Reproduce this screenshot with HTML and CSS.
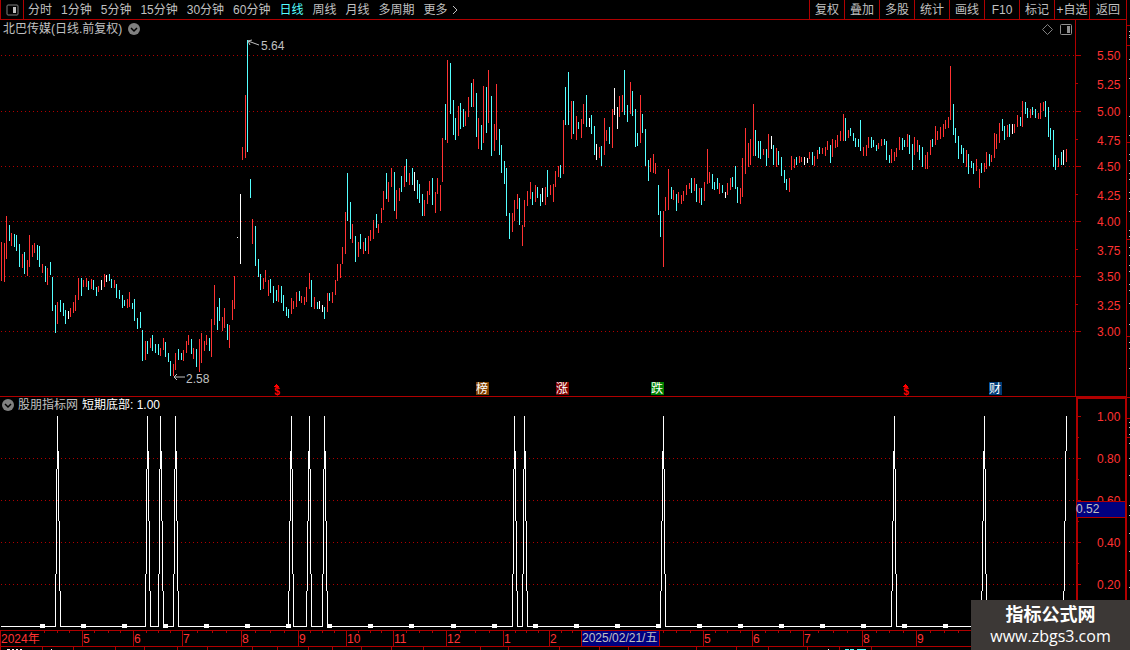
FILE: index.html
```html
<!DOCTYPE html>
<html lang="zh-CN">
<head>
<meta charset="utf-8">
<title>北巴传媒 日线</title>
<link rel="stylesheet" href="styles.css">
</head>
<body>
<div class="app">
  <header class="toolbar">
    <button class="layout-btn" type="button" aria-label="布局">
      <svg class="layout-icon" width="13" height="12" viewBox="0 0 13 12"><rect x="1" y="1" width="11" height="10" rx="1" fill="none" stroke="#808080"/><rect x="7" y="3" width="3" height="6" fill="#c0c0c0"/></svg>
    </button>
    <nav class="periods">
      <button type="button">分时</button>
      <button type="button">1分钟</button>
      <button type="button">5分钟</button>
      <button type="button">15分钟</button>
      <button type="button">30分钟</button>
      <button type="button">60分钟</button>
      <button type="button" class="active">日线</button>
      <button type="button">周线</button>
      <button type="button">月线</button>
      <button type="button">多周期</button>
      <button type="button" class="more">更多<svg width="6" height="10" viewBox="0 0 6 10"><path d="M1 1L5 5L1 9" fill="none" stroke="#c0c0c0"/></svg></button>
    </nav>
    <div class="tools">
      <button type="button">复权</button>
      <button type="button">叠加</button>
      <button type="button">多股</button>
      <button type="button">统计</button>
      <button type="button">画线</button>
      <button type="button">F10</button>
      <button type="button">标记</button>
      <button type="button">+自选</button>
      <button type="button" class="back">返回</button>
    </div>
  </header>

  <section class="panel">
    <div class="panel-title">
      <span>北巴传媒(日线.前复权)</span>
      <button type="button" class="round" aria-label="展开"><svg width="12" height="12" viewBox="0 0 12 12"><circle cx="6" cy="6" r="6" fill="#808080"/><path d="M3 5L6 8L9 5" fill="none" stroke="#000" stroke-width="1.5"/></svg></button>
      <span class="corner">
        <svg width="11" height="11" viewBox="0 0 11 11"><path d="M5.500 .5L10.500 5.500L5.500 10.500L.5 5.500Z" fill="none" stroke="#808080"/></svg>
        <svg width="12" height="11" viewBox="0 0 12 11"><rect x=".5" y=".5" width="11" height="10" rx="1" fill="none" stroke="#909090"/><rect x="7" y="2" width="3" height="7" fill="#909090"/></svg>
      </span>
    </div>
    <svg class="plot" viewBox="0 20 1126 377">
      <g id="price-grid" class="grid"></g>
      <g class="frame"><path id="price-frame"/></g>
      <path id="bars-r" class="up"/><path id="bars-c" class="down"/><path id="bars-w" class="flat"/>
      <g class="scale" id="price-scale"></g>
      <g class="arrow"><path d="M248 41L259 45M248 41L252 40M248 41L250 45"/><path d="M174 377H185M174 377L177 374M174 377L177 380"/></g>
      <text class="note" x="261" y="50">5.64</text>
      <text class="note" x="186" y="383">2.58</text>
      <path class="hat" d="M276 384h1v1h1v1h1v1h-5v-1h1v-1h1zM905 384h1v1h1v1h1v1h-5v-1h1v-1h1z"/>
      <text class="dollar" x="277" y="395">$</text>
      <text class="dollar" x="906" y="395">$</text>
      <rect x="476" y="382" width="13" height="13" fill="#804000"/><text class="mark" x="482" y="393">榜</text>
      <rect x="556" y="382" width="13" height="13" fill="#800000"/><text class="mark" x="562" y="393">涨</text>
      <rect x="651" y="382" width="13" height="13" fill="#008000"/><text class="mark" x="657" y="393">跌</text>
      <rect x="989" y="382" width="13" height="13" fill="#003c78"/><text class="mark" x="995" y="393">财</text>
    </svg>
  </section>

  <section class="panel">
    <div class="panel-title indicator-title">
      <button type="button" class="round" aria-label="展开"><svg width="12" height="12" viewBox="0 0 12 12"><circle cx="6" cy="6" r="6" fill="#808080"/><path d="M3 5L6 8L9 5" fill="none" stroke="#000" stroke-width="1.5"/></svg></button>
      <span>股朋指标网</span>
      <span class="value">短期底部: 1.00</span>
    </div>
    <svg class="plot" viewBox="0 397 1126 233">
      <g id="ind-grid" class="grid"></g>
      <g class="frame"><path id="ind-frame"/></g>
      <path id="spikes" class="flat"/>
      <g class="scale" id="ind-scale"></g>
      <rect class="cursor-box" x="1077" y="501" width="48" height="17"/>
      <path class="cursor-edge" d="M1077 501h48v1h-48zM1077 517h48v1h-48z"/>
      <text class="note cursor-text" x="1076" y="513">0.52</text>
    </svg>
  </section>

  <section class="panel">
    <svg class="plot" viewBox="0 630 1126 20">
      <g class="frame"><path id="time-frame"/></g>
      <rect class="cursor-box" x="582" y="631" width="77" height="15"/>
      <g id="time-labels" class="scale"></g>
      <text class="note cursor-text" x="582" y="642">2025/02/21/五</text>
      <path class="flat" d="M7 649h3v1h-3zM12 649h2v1h-2zM16 649h2v1h-2zM20 649h2v1h-2zM51 649h1v1h-1zM828 649h1v1h-1z"/>
      <path class="down" d="M845 649h4v1h-4zM850 649h4v1h-4zM857 649h9v1h-9z"/>
    </svg>
  </section>

  <aside class="edge"><svg width="3" height="650" viewBox="0 0 3 650"><path id="edge-red" class="edge-red"/><path id="edge-gray" class="edge-gray"/></svg></aside>

  <a class="watermark" href="#"><strong>指标公式网</strong><span>www.zbgs3.com</span></a>
</div>
<script src="chart.js"></script>
</body>
</html>
```

FILE: styles.css
```css
* { box-sizing: border-box; }

body {
  margin: 0;
  background: #000;
  color: #c0c0c0;
  font: 12px/16px "Liberation Sans", "Noto Sans CJK SC", sans-serif;
}

button {
  margin: 0;
  padding: 0;
  border: 0;
  background: none;
  color: inherit;
  font: inherit;
  white-space: nowrap;
}

.app {
  position: relative;
  display: grid;
  grid-template-columns: minmax(0, 1fr) 4px;
}

.toolbar {
  grid-column: 1;
  display: flex;
  height: 20px;
  border-bottom: 1px solid #b00000;
}

.layout-btn {
  width: 24px;
  border: solid #b00000;
  border-width: 0 1px;
}

.layout-icon { display: block; margin: 0 auto; }

.periods {
  display: flex;
  flex: 1;
  gap: 9px;
  padding-left: 4px;
}

.periods .active { color: #54ffff; }

.more {
  display: flex;
  align-items: center;
  gap: 4px;
}

.tools { display: flex; }

.tools button {
  width: 35px;
  border-left: 1px solid #b00000;
}

.tools .back { width: 37px; }

.panel {
  grid-column: 1;
  position: relative;
}

.plot {
  display: block;
  width: 100%;
  height: auto;
}

.panel-title {
  position: absolute;
  top: 1px;
  left: 3px;
  right: 54px;
  display: flex;
  align-items: center;
  gap: 6px;
}

.indicator-title {
  top: 0;
  left: 2px;
  gap: 4px;
}

.indicator-title .value { color: #fff; }

.round svg { display: block; }

.corner {
  display: flex;
  gap: 7px;
  margin-left: auto;
}

.grid path { fill: #b00000; }
.frame path { fill: #b00000; }
.up { fill: #ff3232; }
.down { fill: #54ffff; }
.flat { fill: #fff; }
.scale text { fill: #ff3232; }
.note { fill: #c0c0c0; }
.arrow path { fill: none; stroke: #c0c0c0; }
.hat { fill: #f00; }

.dollar {
  fill: #f00;
  font-size: 10px;
  font-weight: bold;
  text-anchor: middle;
}

.mark {
  fill: #fff;
  font-size: 12px;
  text-anchor: middle;
}

.cursor-box { fill: #000080; }
.cursor-edge { fill: #b00000; }

.edge {
  grid-column: 2;
  grid-row: 1 / span 4;
  border-left: 1px solid #b00000;
}

.edge svg { display: block; }
.edge-red { fill: #b00000; }
.edge-gray { fill: #c0c0c0; }

.watermark {
  position: absolute;
  right: 0;
  bottom: 0;
  width: 159px;
  height: 50px;
  padding-top: 4px;
  background: #3c3836;
  color: #fff;
  text-align: center;
  text-decoration: none;
}

.watermark strong {
  display: block;
  font-size: 18px;
  line-height: 22px;
}

.watermark span {
  display: block;
  font: 16px/20px "Open Sans", sans-serif;
}
```

FILE: chart.js
```js
// Each bar: colour (r up, c down, w unchanged), x, high, low.
const BARS = `
r1,242,281 r4,243,282 r6,216,259 c9,225,241 r11,233,246 c14,234,247 c16,235,251 c19,244,267 r22,254,268 c24,252,274
r27,260,276 r29,235,267 r32,245,257 r34,243,253 c37,245,260 c39,246,267 r42,264,273 c45,266,282 r47,268,285 c50,262,275
c52,277,311 c55,305,333 r57,302,324 c60,300,312 c63,303,316 c65,310,324 w68,311,319 r70,308,317 r73,302,313 r75,295,311
r78,278,300 c81,278,296 r83,280,287 r86,278,287 c88,281,290 r91,279,289 c93,280,290 c96,287,296 r98,286,292 w101,280,290
r104,274,287 w106,275,282 c109,274,281 c111,279,288 r114,280,288 c116,284,298 c119,290,299 c122,295,308 c124,300,306 r127,299,308
r129,292,307 c132,303,309 c134,299,321 c137,318,329 c140,312,328 c142,330,361 r145,341,360 c147,341,354 r150,338,348 c152,335,351
c155,344,353 c158,344,355 r160,348,356 r163,338,350 c165,342,357 c168,353,362 c170,361,376 r173,364,376 r175,353,370 c178,349,360
c181,353,360 r183,350,361 r186,341,353 r188,335,345 c191,339,354 r193,348,359 c196,349,367 r199,339,372 r201,333,363 r204,341,351
r206,335,345 c209,338,351 r211,319,357 r214,285,325 c217,307,330 c219,298,321 r222,317,331 r224,308,328 c227,324,340 r229,325,348
r232,300,320 r234,276,309 w237,237,238 w240,194,264 r242,147,160 r245,95,158 c247,40,152 c250,179,198 r252,219,244 c255,226,266
c258,259,277 c260,274,290 r263,278,289 r265,270,282 r268,280,296 c270,279,293 c273,286,303 c276,290,301 r278,285,302 c281,286,303
c283,295,311 c286,307,316 c288,309,318 r291,298,314 r293,301,309 r296,292,307 c299,291,301 r301,296,303 r304,297,305 r306,287,302
r309,273,289 c311,280,307 r314,297,309 c317,302,309 w319,301,309 w322,305,312 c324,307,319 r327,293,312 c329,293,301 r332,292,303
r335,280,295 r337,264,281 r340,264,278 r342,247,264 r345,212,254 c347,173,221 c350,202,239 r352,224,243 c355,236,262 r358,242,257
c360,234,249 r363,242,254 c365,238,251 r368,236,254 r370,230,241 r373,220,239 c376,214,228 r378,224,233 r381,208,223 r383,191,210
c386,173,199 r388,182,202 r391,168,187 c394,172,211 r396,190,219 r399,188,201 c401,176,192 r404,166,187 c406,159,182 r409,173,185
c412,168,185 w414,172,191 c417,180,199 c419,184,203 c422,194,216 r424,200,216 r427,191,204 r429,181,195 c432,178,205 r435,192,213
r437,178,194 r440,185,211 r442,138,182 c445,104,140 r447,60,143 c450,63,114 c453,100,135 c455,118,140 r458,106,136 c460,103,129
c463,109,127 r465,111,126 r468,97,117 c471,83,107 r473,79,107 c476,93,137 r478,118,149 c481,125,150 r483,86,143 c486,87,133
r488,70,123 c491,96,156 r494,124,151 r496,84,140 c499,129,155 c501,145,173 c504,161,184 c506,168,216 c509,213,239 r512,213,232
r514,200,221 r517,194,209 c519,198,225 r522,225,246 r524,200,227 r527,191,206 r530,182,199 c532,192,205 r535,185,202 c537,187,198
c540,194,206 w542,188,202 r545,187,205 c547,170,197 r550,185,195 r553,184,202 r555,171,187 r558,166,177 c560,165,178 r563,120,174
c565,87,125 c568,72,125 r571,101,139 c573,101,134 r576,116,140 c578,122,129 r581,119,138 r583,104,124 c586,95,127 w589,118,127
c591,115,134 c594,126,155 w596,144,160 r599,147,158 c601,146,166 r604,118,155 r606,130,141 c609,127,144 r612,109,148 w614,88,115
w617,107,129 r619,96,117 r622,95,112 c624,70,115 c627,105,122 r630,82,114 c632,91,116 c635,109,147 c637,133,146 r640,95,143
c642,114,133 c645,129,166 c648,160,181 r650,158,172 r653,154,173 r655,163,174 c658,185,215 c660,211,237 r663,211,267 r665,197,211
r668,169,210 c671,187,199 r673,190,200 c676,194,211 r678,192,203 r681,195,204 r683,191,201 r686,185,195 r689,183,189 c691,178,193
r694,178,191 c696,184,202 r699,188,203 c701,188,205 r704,182,201 r707,149,184 r709,172,183 c712,174,189 c714,182,190 c717,178,189
r719,183,194 c722,185,193 w725,192,198 r727,183,195 r730,178,190 c732,177,187 c735,166,189 c737,187,203 r740,188,204 r742,158,197
r745,128,174 r748,143,167 r750,139,165 r753,104,156 c755,130,156 c758,141,158 c760,141,159 r763,149,155 c766,149,166 r768,134,158
w771,136,149 c773,145,165 r776,148,167 c778,151,165 c781,157,176 c784,170,183 c786,179,190 r789,178,192 r791,156,170 r794,159,168
c796,157,165 r799,156,163 r801,157,162 w804,157,165 w807,158,163 r809,152,159 c812,152,165 r814,156,166 r817,150,159 c819,147,154
r822,148,154 r825,147,156 r827,141,150 c830,145,163 r832,139,157 r835,140,148 r837,135,147 r840,131,141 r843,114,141 c845,118,141
r848,130,138 c850,128,136 c853,133,141 c855,138,147 c858,139,147 c860,120,151 r863,147,156 r866,145,156 r868,137,148 c871,137,148
c873,140,147 c876,145,151 r878,143,149 r881,139,146 c884,139,145 c886,141,160 c889,155,163 r891,149,163 r894,152,161 r896,148,157
r899,137,150 c902,138,150 c904,140,147 r907,134,147 c909,135,154 c912,144,170 r914,137,155 r917,140,152 c919,145,160 c922,147,167
r925,155,169 r927,152,169 r930,140,155 c932,139,147 r935,126,145 r937,131,140 r940,127,139 r943,124,137 r945,120,129 r948,117,128
r950,66,120 c953,104,135 c955,128,143 c958,136,159 c961,145,154 c963,148,163 r966,150,167 c968,154,174 c971,161,168 c973,163,174
r976,159,171 r979,169,188 c981,163,173 r984,163,172 r986,152,169 c989,154,166 r991,155,162 r994,133,158 r996,134,149 r999,123,143
c1002,119,131 c1004,126,140 r1007,125,137 c1009,124,137 w1012,124,134 r1014,124,133 r1017,115,127 c1020,117,126 r1022,101,127 c1025,102,114
c1027,108,118 r1030,109,118 c1032,107,115 c1035,109,118 r1038,113,119 r1040,103,119 r1043,102,111 c1045,101,117 c1048,107,137 c1050,128,140
c1053,130,167 c1055,155,170 r1058,158,167 c1061,152,165 w1063,150,165 r1066,149,162`;

// Indicator peaks: left foot, peak, right foot.
const SPIKES = [
  [55, 57, 60], [145, 147, 150], [158, 160, 163], [173, 175, 178],
  [288, 291, 293], [306, 309, 311], [322, 324, 327], [512, 514, 517],
  [522, 524, 527], [660, 663, 665], [891, 894, 896], [981, 984, 986],
  [1063, 1066, null]
];
const TOP = 416, BASE = 626;

const box = (x, y, w, h) => `M${x} ${y}h${w}v${h}h${-w}z`;
const draw = (id, d) => document.getElementById(id).setAttribute('d', d);
const add = (id, markup) => document.getElementById(id).insertAdjacentHTML('beforeend', markup);

const bars = { r: '', c: '', w: '' };
BARS.trim().split(/\s+/).forEach(item => {
  const [x, hi, lo] = item.slice(1).split(',').map(Number);
  bars[item[0]] += box(x, hi, 1, lo - hi);
});
Object.keys(bars).forEach(k => draw('bars-' + k, bars[k]));

function dotted(id, rows) {
  let d = '';
  rows.forEach(y => { for (let x = 1; x < 1075; x += 4) d += box(x, y, 1, 1); });
  add(id, `<path d="${d}"/>`);
}
dotted('price-grid', [55, 111, 166, 221, 276, 331]);
dotted('ind-grid', [458, 500, 542, 584]);

let frame = box(0, 396, 1126, 1) + box(1075, 20, 1, 377);
[55, 111, 166, 221, 276, 331].forEach(y => { frame += box(1076, y, 5, 1); });
[83, 139, 194, 249, 304].forEach(y => { frame += box(1076, y, 2, 1); });
draw('price-frame', frame);

frame = box(1076, 397, 2, 233) + box(1076, 397, 50, 2) + box(1125, 397, 1, 233);
[416, 458, 500, 542, 584].forEach(y => { frame += box(1078, y, 3, 1); });
[437, 479, 521, 563, 605].forEach(y => { frame += box(1078, y, 1, 1); });
draw('ind-frame', frame);

const label = (text, x, y) => `<text x="${x}" y="${y}">${text}</text>`;
[['5.50', 55], ['5.25', 84], ['5.00', 111], ['4.75', 140], ['4.50', 166], ['4.25', 195],
 ['4.00', 221], ['3.75', 250], ['3.50', 276], ['3.25', 305], ['3.00', 331]]
  .forEach(([t, y]) => add('price-scale', label(t, 1097, y + 5)));
[['1.00', 416], ['0.80', 458], ['0.60', 500], ['0.40', 542], ['0.20', 584]]
  .forEach(([t, y]) => add('ind-scale', label(t, 1097, y + 5)));

// One-pixel staircase from a foot to its peak.
function slope(foot, peak) {
  const n = Math.abs(peak - foot), dir = Math.sign(peak - foot), h = BASE - TOP;
  let d = '';
  for (let k = 0; k <= n; k++) {
    const low = k === 0 ? BASE : Math.round(BASE - h * (k - 0.5) / n);
    const high = k === n ? TOP : Math.round(BASE - h * (k + 0.5) / n);
    d += box(foot + dir * k, high, 1, low - high);
  }
  return d;
}
let line = '', from = 1;
SPIKES.forEach(([left, peak, right]) => {
  line += box(from, BASE, left - from + 1, 1) + slope(left, peak);
  if (right !== null) { line += slope(right, peak); from = right; }
});
for (let k = 0; k < 26; k++) line += box(40 + 41 * k + (k > 9 ? 1 : 0), 624, 5, 4);
draw('spikes', line);

const MONTHS = [['2024年', 0], ['5', 82], ['6', 133], ['7', 182], ['8', 241], ['9', 298],
  ['10', 346], ['11', 393], ['12', 446], ['1', 503], ['2', 549], ['', 581], ['', 659],
  ['5', 703], ['6', 752], ['7', 803], ['8', 862], ['9', 916]];
const TICKS = [44, 57, 69, 94, 108, 120, 146, 158, 170, 197, 212, 226, 255, 270, 284, 310, 322,
  334, 358, 370, 381, 406, 419, 432, 460, 475, 489, 515, 526, 538, 561, 572, 663, 676, 690,
  715, 727, 740, 765, 778, 790, 818, 833, 847, 876, 889, 903, 930, 944, 958];
let time = box(0, 630, 1126, 1) + box(0, 646, 1126, 1);
MONTHS.forEach(([t, x]) => {
  time += box(x, 630, 1, 16);
  if (t) add('time-labels', label(t, x + 1, 643));
});
TICKS.forEach(x => { time += box(x, 631, 1, 2); });
[0, 42, 73, 115, 144, 177, 207, 252, 277, 308, 332, 361, 391, 423, 480, 508, 559, 599, 628,
 696, 736, 768, 807, 839, 871].forEach(x => { time += box(x, 647, 1, 3); });
draw('time-frame', time);

draw('edge-red', [25, 45, 142, 239, 336, 397, 418, 437].map(y => box(0, y, 3, 1)).join(''));
draw('edge-gray', [31, 35, 37, 59, 78, 116, 135, 154, 160, 173, 179, 192, 198, 211, 230, 236,
  247, 255, 265, 271, 284, 290, 303, 324, 342, 348, 368, 422, 427, 434, 443, 458, 475, 505,
  515, 533, 551, 570, 587].map(y => box(2, y, 1, 1)).join(''));
```
